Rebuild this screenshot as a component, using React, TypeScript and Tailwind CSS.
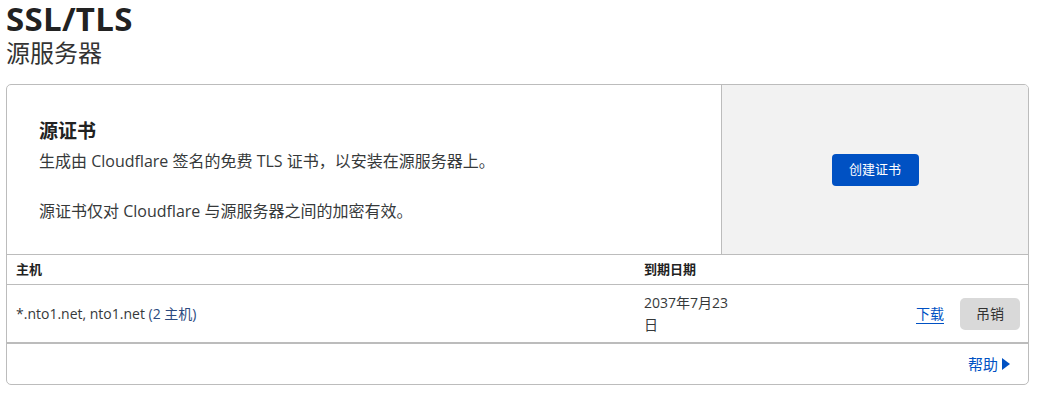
import React from "react";

export default function App() {
  const font = { fontFamily: '"Open Sans", "Noto Sans CJK SC", sans-serif' };
  return (
    <div className="bg-white w-[1037px] h-[394px] pl-[6px] pr-[8px] pt-[1px] text-[#36393a]" style={font}>
      <h1 className="text-[33px] leading-[35px] font-bold text-[#222] tracking-[0.3px]">SSL/TLS</h1>
      <h2 className="text-[24px] leading-[30px] mt-[2px] text-[#333]">源服务器</h2>
      <div className="mt-[16px] border border-[#bcbcbc] rounded-[5px] overflow-hidden">
        <div className="flex">
          <div className="flex-1 pt-[34px] pb-[30px] pl-[32px]">
            <h3 className="text-[19px] leading-[25px] font-bold text-[#222]">源证书</h3>
            <div className="mt-[5px] text-[16px] leading-[25px]">
              <p>生成由 Cloudflare 签名的免费 TLS 证书，以安装在源服务器上。</p>
              <p className="mt-[25px]">源证书仅对 Cloudflare 与源服务器之间的加密有效。</p>
            </div>
          </div>
          <div className="w-[307px] bg-[#f2f2f2] border-l border-[#bcbcbc] flex items-center justify-center">
            <button className="h-[32px] w-[87px] rounded-[4px] bg-[#0051c3] text-white text-[13px]">创建证书</button>
          </div>
        </div>
        <div className="flex h-[31px] items-center border-t border-b border-[#bcbcbc] text-[13px] font-bold text-[#222]">
          <div className="w-[637px] pl-[9px]">主机</div>
          <div>到期日期</div>
        </div>
        <div className="flex h-[59px] items-center border-b-2 border-[#bcbcbc] text-[14px]">
          <div className="w-[637px] pl-[9px]">
            *.nto1.net, nto1.net <span className="text-[#2b4a80]">(2 主机)</span>
          </div>
          <div className="w-[96px] leading-[22px]">2037年7月23日</div>
          <div className="flex-1 flex items-center justify-end gap-[16px] pr-[8px]">
            <a className="text-[#0051c3] underline underline-offset-[4px] decoration-[#0051c3]">下载</a>
            <button className="h-[32px] w-[60px] rounded-[5px] bg-[#d9d9d9] text-[#313131] text-[14px]">吊销</button>
          </div>
        </div>
        <div className="h-[40px] flex items-center justify-end pr-[18px] text-[15px] text-[#0051c3]">
          <span>帮助</span>
          <svg width="8" height="12" viewBox="0 0 8 12" className="ml-[4px]">
            <path d="M0 0 L8 6 L0 12 Z" fill="#0051c3" />
          </svg>
        </div>
      </div>
    </div>
  );
}
